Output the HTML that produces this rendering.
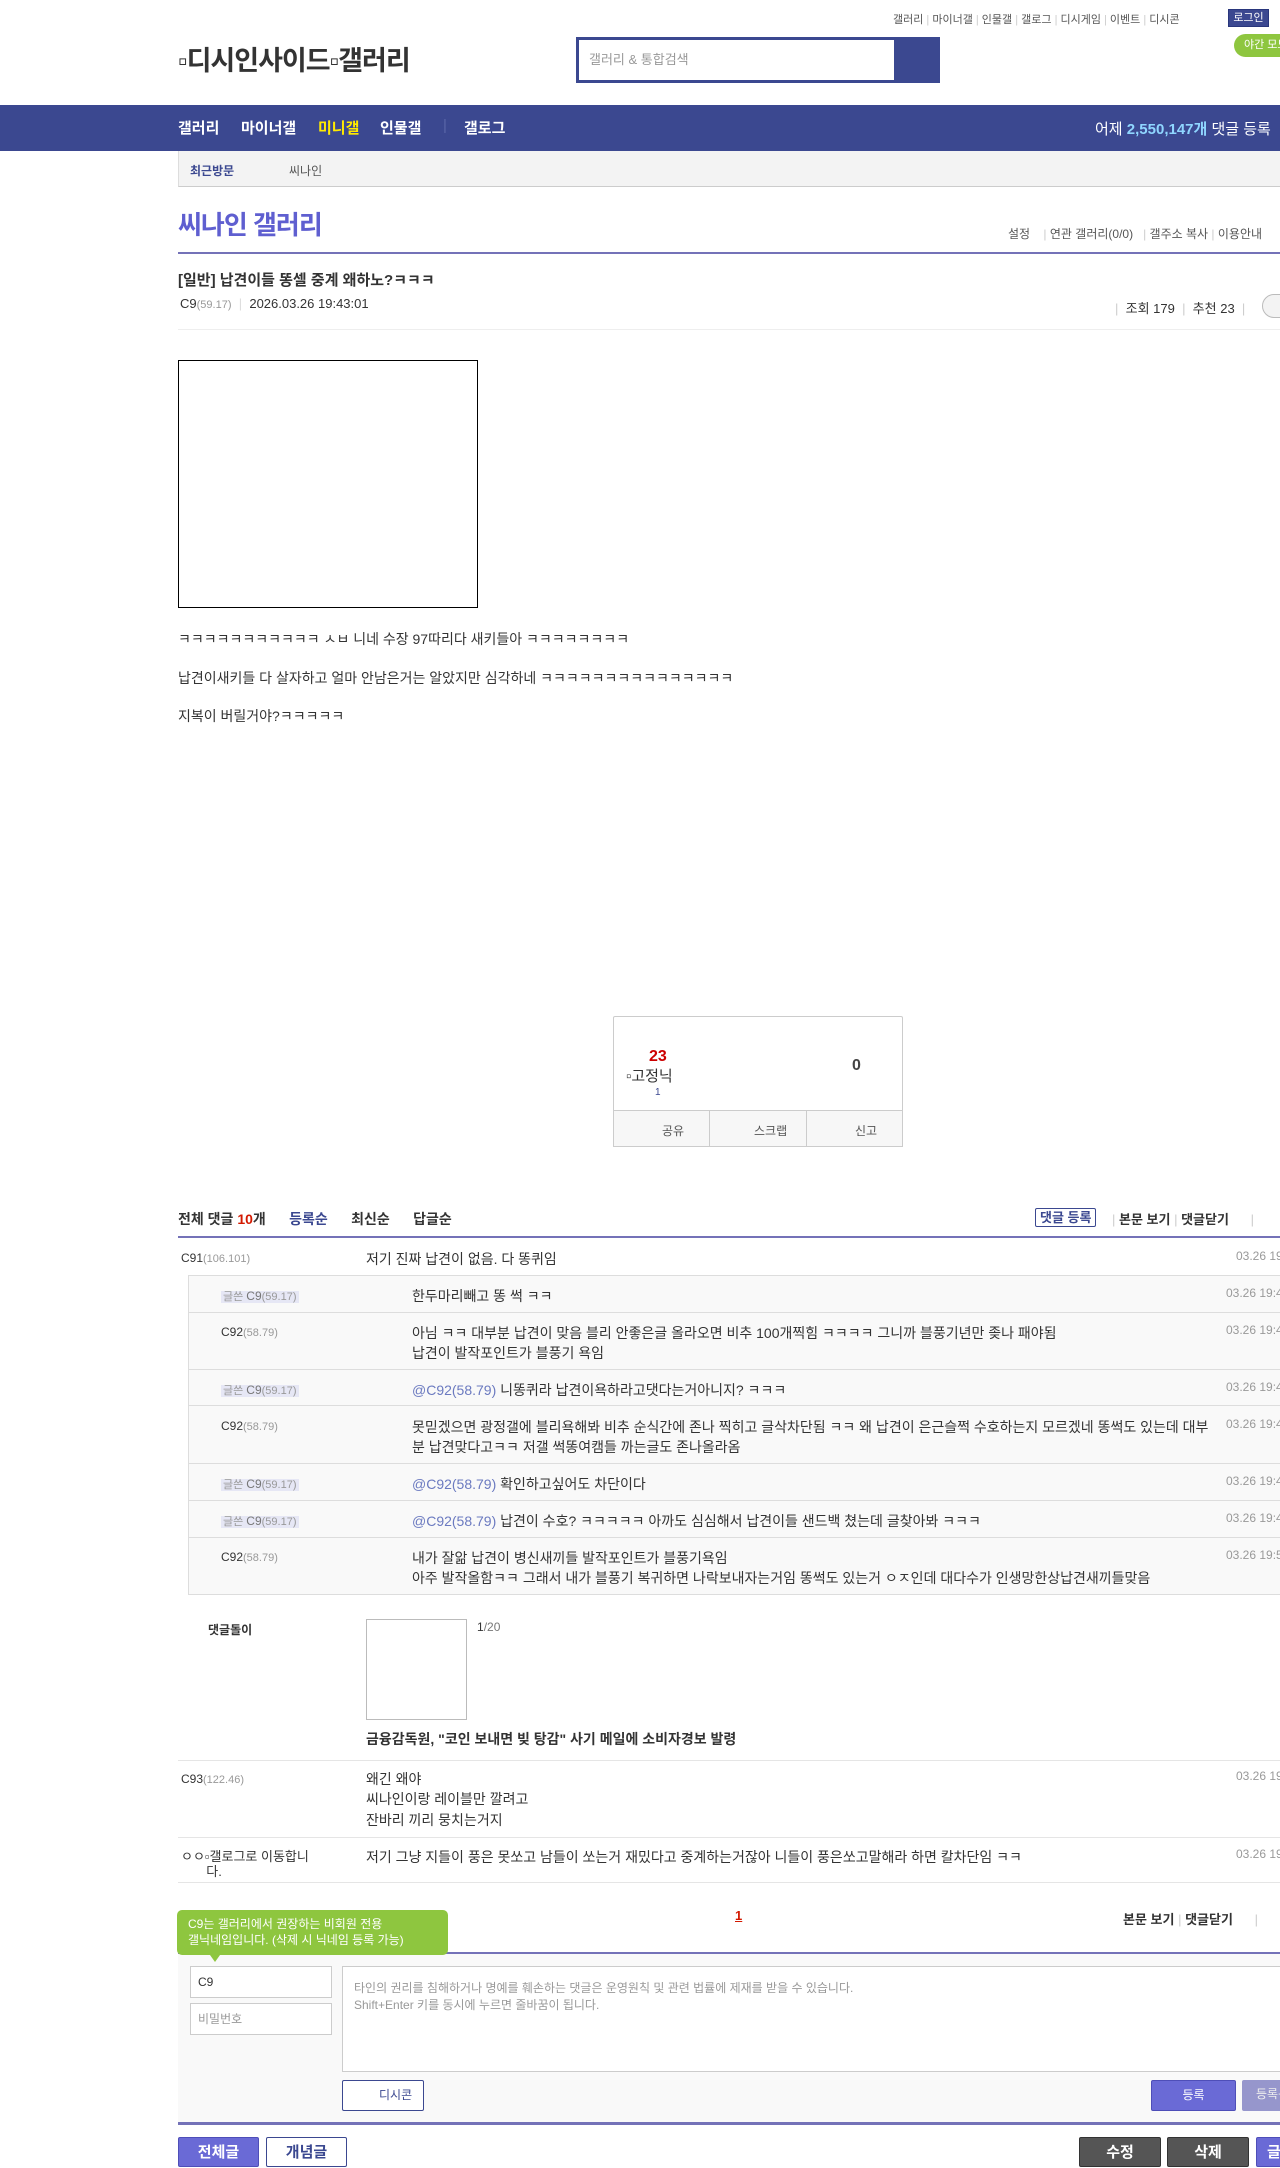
<!DOCTYPE html>
<html><head><meta charset="utf-8">
<style>
*{margin:0;padding:0;box-sizing:border-box}
body{width:1280px;height:2160px;overflow:hidden;background:#fff;font-family:"Liberation Sans","Noto Sans CJK KR",sans-serif;color:#333;position:relative;font-size:14px}
.a{position:absolute;white-space:nowrap}
.sm{font-size:11px;color:#999}
.rbox{position:absolute;left:188px;width:1100px;background:#f9f9f9;border-top:1px solid #ddd}
.tag{background:#e6e7f5;color:#999;padding:0 2px}
.tag b{font-weight:normal;color:#777}
.at{color:#6b7ac0}
.date{color:#999;font-size:12px}
.nav{position:absolute;top:117px;font-size:15px;font-weight:bold;color:#fff}
</style></head><body>
<div class="a" style="left:893px;top:11px;font-size:11px;color:#555">갤러리 <span style="color:#ccc">|</span> 마이너갤 <span style="color:#ccc">|</span> 인물갤 <span style="color:#ccc">|</span> 갤로그 <span style="color:#ccc">|</span> 디시게임 <span style="color:#ccc">|</span> 이벤트 <span style="color:#ccc">|</span> 디시콘</div>
<div class="a" style="left:1228px;top:9px;width:41px;height:18px;background:#3b4890;border:1px solid #29367c;color:#fff;font-size:11px;text-align:center;line-height:16px">로그인</div>
<div class="a" style="left:1234px;top:34px;width:60px;height:23px;background:#8ec63f;border-radius:12px;color:#fff;font-size:11px;line-height:23px;padding-left:10px">야간 모드</div>
<div class="a" style="left:178px;top:39px;font-size:27px;font-weight:bold;color:#333;letter-spacing:-1px">▫디시인사이드▫갤러리</div>
<div class="a" style="left:576px;top:37px;width:364px;height:46px;background:#3b4890"></div>
<div class="a" style="left:579px;top:40px;width:315px;height:40px;background:#fff;font-size:13px;color:#999;line-height:40px;padding-left:10px">갤러리 &amp; 통합검색</div>
<div class="a" style="left:0;top:105px;width:1280px;height:46px;background:#3b4890"></div>
<div class="nav" style="left:178px">갤러리</div>
<div class="nav" style="left:241px">마이너갤</div>
<div class="nav" style="left:318px;color:#ffea00">미니갤</div>
<div class="nav" style="left:380px">인물갤</div>
<div class="nav" style="left:443px;color:#5a66a8;font-weight:normal">|</div>
<div class="nav" style="left:464px">갤로그</div>
<div class="a" style="left:1095px;top:118px;font-size:15px;color:#fff">어제 <b style="color:#8fd6ff">2,550,147개</b> 댓글 등록</div>
<div class="a" style="left:178px;top:151px;width:1110px;height:36px;background:#f3f3f3;border-bottom:1px solid #ccc;border-left:1px solid #ddd"></div>
<div class="a" style="left:190px;top:162px;font-size:12px;font-weight:bold;color:#3b4890">최근방문</div>
<div class="a" style="left:289px;top:162px;font-size:12px;color:#555">씨나인</div>
<div class="a" style="left:178px;top:205px;font-size:26px;font-weight:bold;color:#5f5fd0;letter-spacing:-1px">씨나인 갤러리</div>
<div class="a" style="left:1008px;top:225px;font-size:12px;color:#555">설정 &nbsp;&nbsp;&nbsp;<span style="color:#ccc">|</span> 연관 갤러리(0/0) &nbsp;&nbsp;<span style="color:#ccc">|</span> 갤주소 복사 <span style="color:#ccc">|</span> 이용안내</div>
<div class="a" style="left:178px;top:252px;width:1110px;height:2px;background:#7472b8"></div>
<div class="a" style="left:178px;top:269px;font-size:15px;font-weight:bold;color:#333">[일반] 납견이들 똥셀 중계 왜하노?ㅋㅋㅋ</div>
<div class="a" style="left:180px;top:296px;font-size:13px;color:#333">C9<span class="sm">(59.17)</span> &nbsp;<span style="color:#ddd">|</span>&nbsp; 2026.03.26 19:43:01</div>
<div class="a" style="left:1115px;top:298px;font-size:13px;color:#333"><span style="color:#ccc">|</span>&nbsp; 조회 179 &nbsp;<span style="color:#ccc">|</span>&nbsp; 추천 23 &nbsp;<span style="color:#ccc">|</span></div>
<div class="a" style="left:1262px;top:294px;width:30px;height:24px;border:1px solid #bbb;border-radius:12px;background:#f3f3f3"></div>
<div class="a" style="left:178px;top:329px;width:1110px;height:1px;background:#eee"></div>
<div class="a" style="left:178px;top:360px;width:300px;height:248px;border:1px solid #000"></div>
<div class="a" style="left:178px;top:629px">ㅋㅋㅋㅋㅋㅋㅋㅋㅋㅋㅋ ㅅㅂ 니네 수장 97따리다 새키들아 ㅋㅋㅋㅋㅋㅋㅋㅋ</div>
<div class="a" style="left:178px;top:668px">납견이새키들 다 살자하고 얼마 안남은거는 알았지만 심각하네 ㅋㅋㅋㅋㅋㅋㅋㅋㅋㅋㅋㅋㅋㅋㅋ</div>
<div class="a" style="left:178px;top:706px">지복이 버릴거야?ㅋㅋㅋㅋㅋ</div>
<div class="a" style="left:613px;top:1016px;width:290px;height:131px;border:1px solid #ccc;border-radius:2px"></div>
<div class="a" style="left:613px;top:1110px;width:290px;height:37px;background:#f7f7f7;border:1px solid #ccc"></div>
<div class="a" style="left:709px;top:1110px;width:1px;height:37px;background:#ccc"></div>
<div class="a" style="left:806px;top:1110px;width:1px;height:37px;background:#ccc"></div>
<div class="a" style="left:662px;top:1122px;font-size:12px;color:#555">공유</div>
<div class="a" style="left:754px;top:1122px;font-size:12px;color:#555">스크랩</div>
<div class="a" style="left:855px;top:1122px;font-size:12px;color:#555">신고</div>
<div class="a" style="left:649px;top:1048px;font-size:16px;font-weight:bold;color:#c00">23</div>
<div class="a" style="left:626px;top:1065px;font-size:15px;color:#333">▫고정닉</div>
<div class="a" style="left:655px;top:1087px;font-size:10px;color:#3b4890">1</div>
<div class="a" style="left:852px;top:1057px;font-size:16px;font-weight:bold;color:#444">0</div>
<div class="a" style="left:178px;top:1209px;font-size:14px;font-weight:bold;color:#333">전체 댓글 <span style="color:#d31900">10</span>개&nbsp;&nbsp;&nbsp;&nbsp;&nbsp; <span style="color:#3b4890">등록순</span>&nbsp;&nbsp;&nbsp;&nbsp;&nbsp; 최신순&nbsp;&nbsp;&nbsp;&nbsp;&nbsp; 답글순</div>
<div class="a" style="left:1035px;top:1208px;height:19px;border:1px solid #3b4890;border-radius:2px;font-size:13px;font-weight:bold;color:#3b4890;padding:0 4px;line-height:17px">댓글 등록</div>
<div class="a" style="left:1112px;top:1209px;font-size:13px;font-weight:bold;color:#333"><span style="color:#ccc;font-weight:normal">|</span> 본문 보기 <span style="color:#ccc;font-weight:normal">|</span> 댓글닫기&nbsp;&nbsp;&nbsp;&nbsp;&nbsp; <span style="color:#ccc;font-weight:normal">|</span></div>
<div class="a" style="left:178px;top:1236px;width:1110px;height:2px;background:#7472b8"></div>
<div class="a" style="left:181px;top:1251px;font-size:12px">C91<span class="sm">(106.101)</span></div>
<div class="a" style="left:366px;top:1249px">저기 진짜 납견이 없음. 다 똥퀴임</div>
<div class="a date" style="left:1236px;top:1249px">03.26 19:44:12</div>
<div class="rbox" style="top:1275px;height:320px;border-left:1px solid #ddd;border-bottom:1px solid #ddd"></div>
<div class="a" style="left:188px;top:1312px;width:1100px;height:1px;background:#ddd"></div>
<div class="a" style="left:188px;top:1369px;width:1100px;height:1px;background:#ddd"></div>
<div class="a" style="left:188px;top:1405px;width:1100px;height:1px;background:#ddd"></div>
<div class="a" style="left:188px;top:1463px;width:1100px;height:1px;background:#ddd"></div>
<div class="a" style="left:188px;top:1500px;width:1100px;height:1px;background:#ddd"></div>
<div class="a" style="left:188px;top:1537px;width:1100px;height:1px;background:#ddd"></div>
<div class="a" style="left:221px;top:1288px;font-size:11px"><span class="tag">글쓴 <b style="font-size:12px">C9</b>(59.17)</span></div>
<div class="a" style="left:412px;top:1286px">한두마리빼고 똥 썩 ㅋㅋ</div>
<div class="a date" style="left:1226px;top:1286px">03.26 19:45:01</div>
<div class="a" style="left:221px;top:1325px;font-size:12px">C92<span class="sm">(58.79)</span></div>
<div class="a" style="left:412px;top:1323px">아님 ㅋㅋ 대부분 납견이 맞음 블리 안좋은글 올라오면 비추 100개찍힘 ㅋㅋㅋㅋ 그니까 블풍기년만 좆나 패야됨</div>
<div class="a" style="left:412px;top:1343px">납견이 발작포인트가 블풍기 욕임</div>
<div class="a date" style="left:1226px;top:1323px">03.26 19:46:10</div>
<div class="a" style="left:221px;top:1382px;font-size:11px"><span class="tag">글쓴 <b style="font-size:12px">C9</b>(59.17)</span></div>
<div class="a" style="left:412px;top:1380px"><span class="at">@C92(58.79)</span> 니똥퀴라 납견이욕하라고댓다는거아니지? ㅋㅋㅋ</div>
<div class="a date" style="left:1226px;top:1380px">03.26 19:47:22</div>
<div class="a" style="left:221px;top:1419px;font-size:12px">C92<span class="sm">(58.79)</span></div>
<div class="a" style="left:412px;top:1417px">못믿겠으면 광정갤에 블리욕해봐 비추 순식간에 존나 찍히고 글삭차단됨 ㅋㅋ 왜 납견이 은근슬쩍 수호하는지 모르겠네 똥썩도 있는데 대부</div>
<div class="a" style="left:412px;top:1437px">분 납견맞다고ㅋㅋ 저갤 썩똥여캠들 까는글도 존나올라옴</div>
<div class="a date" style="left:1226px;top:1417px">03.26 19:48:30</div>
<div class="a" style="left:221px;top:1476px;font-size:11px"><span class="tag">글쓴 <b style="font-size:12px">C9</b>(59.17)</span></div>
<div class="a" style="left:412px;top:1474px"><span class="at">@C92(58.79)</span> 확인하고싶어도 차단이다</div>
<div class="a date" style="left:1226px;top:1474px">03.26 19:49:11</div>
<div class="a" style="left:221px;top:1513px;font-size:11px"><span class="tag">글쓴 <b style="font-size:12px">C9</b>(59.17)</span></div>
<div class="a" style="left:412px;top:1511px"><span class="at">@C92(58.79)</span> 납견이 수호? ㅋㅋㅋㅋㅋ 아까도 심심해서 납견이들 샌드백 쳤는데 글찾아봐 ㅋㅋㅋ</div>
<div class="a date" style="left:1226px;top:1511px">03.26 19:49:52</div>
<div class="a" style="left:221px;top:1550px;font-size:12px">C92<span class="sm">(58.79)</span></div>
<div class="a" style="left:412px;top:1548px">내가 잘앎 납견이 병신새끼들 발작포인트가 블풍기욕임</div>
<div class="a" style="left:412px;top:1568px">아주 발작올함ㅋㅋ 그래서 내가 블풍기 복귀하면 나락보내자는거임 똥썩도 있는거 ㅇㅈ인데 대다수가 인생망한상납견새끼들맞음</div>
<div class="a date" style="left:1226px;top:1548px">03.26 19:50:40</div>
<div class="a" style="left:208px;top:1621px;font-size:12px;font-weight:bold">댓글돌이</div>
<div class="a" style="left:366px;top:1619px;width:101px;height:101px;border:1px solid #bbb"></div>
<div class="a" style="left:477px;top:1620px;font-size:12px">1<span style="color:#777">/20</span></div>
<div class="a" style="left:366px;top:1729px;font-size:14px;font-weight:bold">금융감독원, "코인 보내면 빚 탕감" 사기 메일에 소비자경보 발령</div>
<div class="a" style="left:178px;top:1760px;width:1110px;height:1px;background:#e5e5e5"></div>
<div class="a" style="left:181px;top:1772px;font-size:12px">C93<span class="sm">(122.46)</span></div>
<div class="a" style="left:366px;top:1769px">왜긴 왜야</div>
<div class="a" style="left:366px;top:1789px">씨나인이랑 레이블만 깔려고</div>
<div class="a" style="left:366px;top:1810px">잔바리 끼리 뭉치는거지</div>
<div class="a date" style="left:1236px;top:1769px">03.26 19:52:03</div>
<div class="a" style="left:178px;top:1837px;width:1110px;height:1px;background:#e5e5e5"></div>
<div class="a" style="left:181px;top:1849px;font-size:13px;line-height:15px;width:150px">ㅇㅇ▫갤로그로 이동합니<br>&nbsp;&nbsp;&nbsp;&nbsp;&nbsp;&nbsp;&nbsp;다.</div>
<div class="a" style="left:366px;top:1847px">저기 그냥 지들이 풍은 못쏘고 남들이 쏘는거 재밌다고 중계하는거잖아 니들이 풍은쏘고말해라 하면 칼차단임 ㅋㅋ</div>
<div class="a date" style="left:1236px;top:1847px">03.26 19:53:30</div>
<div class="a" style="left:178px;top:1882px;width:1110px;height:1px;background:#e5e5e5"></div>
<div class="a" style="left:735px;top:1908px;font-size:13px;font-weight:bold;color:#d31900;text-decoration:underline">1</div>
<div class="a" style="left:1123px;top:1909px;font-size:13px;font-weight:bold">본문 보기 <span style="color:#ccc;font-weight:normal">|</span> 댓글닫기&nbsp;&nbsp;&nbsp;&nbsp;&nbsp; <span style="color:#ccc;font-weight:normal">|</span></div>
<div class="a" style="left:178px;top:1952px;width:1110px;height:172px;background:#f9f9f9;border-top:2px solid #7472b8"></div>
<div class="a" style="left:178px;top:2122px;width:1110px;height:3px;background:#7472b8"></div>
<div class="a" style="left:177px;top:1910px;width:271px;height:45px;background:#8ec63f;border-radius:5px;color:#fff;font-size:12px;line-height:16px;padding:6px 0 0 11px">C9는 갤러리에서 권장하는 비회원 전용<br>갤닉네임입니다. (삭제 시 닉네임 등록 가능)</div>
<div class="a" style="left:210px;top:1955px;width:0;height:0;border-left:5px solid transparent;border-right:5px solid transparent;border-top:7px solid #8ec63f"></div>
<div class="a" style="left:190px;top:1966px;width:142px;height:32px;background:#fff;border:1px solid #ccc;font-size:12px;line-height:30px;padding-left:7px;color:#333">C9</div>
<div class="a" style="left:190px;top:2003px;width:142px;height:32px;background:#fff;border:1px solid #ccc;font-size:12px;line-height:30px;padding-left:7px;color:#999">비밀번호</div>
<div class="a" style="left:342px;top:1966px;width:960px;height:106px;background:#fff;border:1px solid #ccc;font-size:12px;color:#999;line-height:17px;padding:13px 11px">타인의 권리를 침해하거나 명예를 훼손하는 댓글은 운영원칙 및 관련 법률에 제재를 받을 수 있습니다.<br>Shift+Enter 키를 동시에 누르면 줄바꿈이 됩니다.</div>
<div class="a" style="left:342px;top:2080px;width:82px;height:31px;background:#fff;border:1px solid #3b4890;border-radius:2px;font-size:12px;color:#3b4890;line-height:29px;padding-left:36px">디시콘</div>
<div class="a" style="left:1151px;top:2080px;width:85px;height:31px;background:#6a6ad6;border:1px solid #4e4eb8;border-radius:2px;color:#fff;font-size:12px;text-align:center;line-height:29px">등록</div>
<div class="a" style="left:1242px;top:2080px;width:85px;height:31px;background:#9696cc;border-radius:2px;color:#eee;font-size:12px;line-height:29px;padding-left:14px">등록+추천</div>
<div class="a" style="left:178px;top:2137px;width:81px;height:30px;background:#6a6ad6;border:1px solid #4e4eb8;border-radius:2px;color:#fff;font-size:15px;font-weight:bold;text-align:center;line-height:30px">전체글</div>
<div class="a" style="left:266px;top:2137px;width:81px;height:30px;background:#fff;border:1px solid #3b4890;border-radius:2px;color:#3b4890;font-size:15px;font-weight:bold;text-align:center;line-height:30px">개념글</div>
<div class="a" style="left:1079px;top:2137px;width:82px;height:30px;background:#555;border:1px solid #333;border-radius:2px;color:#fff;font-size:15px;font-weight:bold;text-align:center;line-height:30px">수정</div>
<div class="a" style="left:1167px;top:2137px;width:82px;height:30px;background:#555;border:1px solid #333;border-radius:2px;color:#fff;font-size:15px;font-weight:bold;text-align:center;line-height:30px">삭제</div>
<div class="a" style="left:1256px;top:2137px;width:82px;height:30px;background:#6a6ad6;border:1px solid #4e4eb8;border-radius:2px;color:#fff;font-size:15px;font-weight:bold;line-height:30px;padding-left:10px">글쓰기</div>
</body></html>
